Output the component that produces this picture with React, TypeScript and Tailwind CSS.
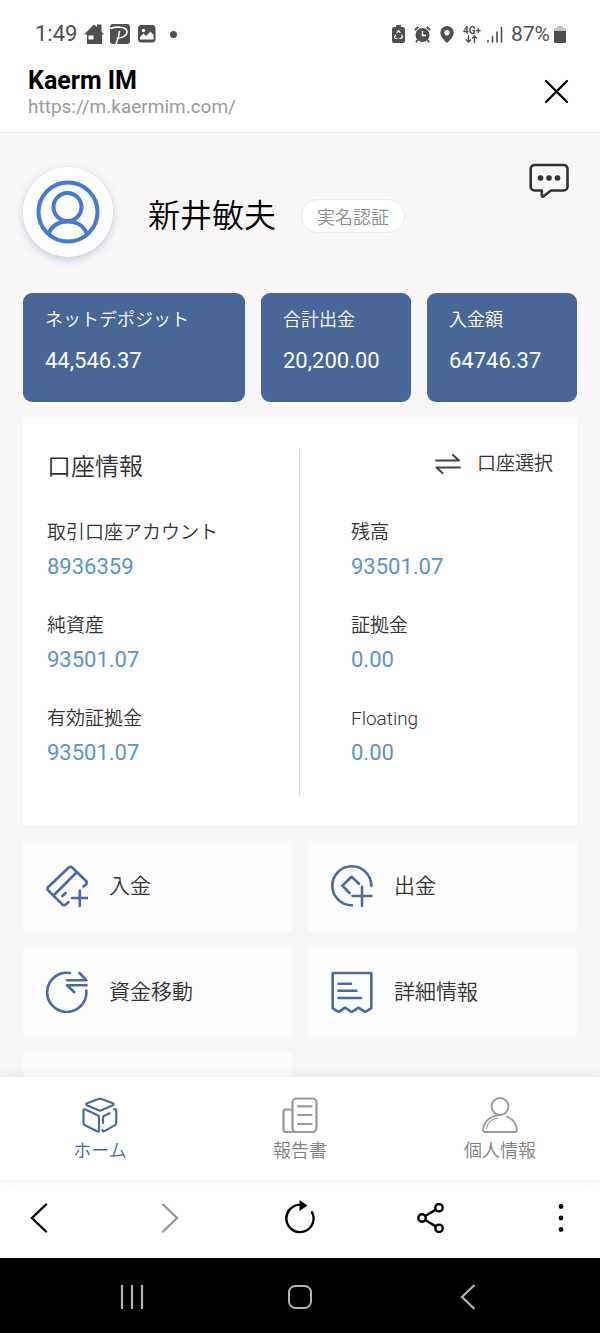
import type { ReactNode } from 'react'

interface Stat {
  label: string
  value: string
}

const totals: Stat[] = [
  { label: 'ネットデポジット', value: '44,546.37' },
  { label: '合計出金', value: '20,200.00' },
  { label: '入金額', value: '64746.37' },
]

const accountLeft: Stat[] = [
  { label: '取引口座アカウント', value: '8936359' },
  { label: '純資産', value: '93501.07' },
  { label: '有効証拠金', value: '93501.07' },
]

const accountRight: Stat[] = [
  { label: '残高', value: '93501.07' },
  { label: '証拠金', value: '0.00' },
  { label: 'Floating', value: '0.00' },
]

function StatusBar() {
  return (
    <div className="flex h-[66px] shrink-0 items-center justify-between pt-0.5 pr-[34px] pl-[35px] text-[#4f4f4f]">
      <div className="flex items-center">
        <span className="text-[22px] leading-7">1:49</span>
        <svg className="ml-[7px] size-5" viewBox="0 0 20 20" fill="currentColor">
          <path fillRule="evenodd" d="M0 10.500 10 .5l3 2.500V.5h4.500v7l2.500 3h-2V20H3v-9.500zM4.500 11.500v4h5v-4z" />
        </svg>
        <svg className="ml-1.5 size-5" viewBox="0 0 20 20" fill="none" stroke="#fff">
          <rect width="20" height="20" rx="3" fill="currentColor" stroke="none" />
          <path d="M0 4.500C6 2.500 16.500 2 17 7.500 17.300 11.500 12 14.500 6.500 14" strokeWidth="1.600" />
          <path d="M9.500 7C9 12 8 16 6 20" strokeWidth="1.600" />
        </svg>
        <svg className="ml-2 size-[18px]" viewBox="0 0 18 18">
          <rect width="17.500" height="17.500" rx="3.500" fill="currentColor" />
          <circle cx="5.500" cy="5.500" r="1.700" fill="#fff" />
          <path d="M2 14.500V12l3.500-3.500L8 11l4.500-4.500 3 3.500v4.500z" fill="#fff" />
        </svg>
        <span className="ml-3.5 size-[7px] rounded-full bg-[#4f4f4f]" />
      </div>

      <div className="flex items-center">
        <svg className="h-[18px] w-[13px]" viewBox="0 0 13 18">
          <path d="M4 0h5v2h2a2 2 0 0 1 2 2v12a2 2 0 0 1-2 2H2a2 2 0 0 1-2-2V4a2 2 0 0 1 2-2h2z" fill="currentColor" />
          <path d="m4.700 8 1.800-2.500L8.300 8M9.500 9.800l1 2.200-1.500 1.500H7.300M5.500 13.500H3.200L2.500 12l1.200-2.300" fill="none" stroke="#fff" strokeWidth="1.200" />
        </svg>
        <svg className="ml-[9px] size-[17px]" viewBox="0 0 17 17">
          <circle cx="8.500" cy="9" r="7" fill="currentColor" />
          <path d="M.8 4 4.300 1M16.200 4l-3.500-3M3.500 14l-1.500 2.300M13.500 14l1.500 2.300" stroke="currentColor" strokeWidth="1.800" />
          <path d="M8.500 5v4.500h3.500" fill="none" stroke="#fff" strokeWidth="1.500" />
        </svg>
        <svg className="ml-[9px] h-[17px] w-[14px]" viewBox="0 0 14 17">
          <path fillRule="evenodd" d="M7 0a6.700 6.700 0 0 1 6.700 6.700C13.700 11 7 17 7 17S.3 11 .3 6.700A6.700 6.700 0 0 1 7 0zm0 4a2.700 2.700 0 1 0 0 5.400A2.700 2.700 0 0 0 7 4z" fill="currentColor" />
        </svg>
        <div className="ml-[9px] flex flex-col items-center">
          <span className="text-[10px] leading-[9px] font-bold">4G+</span>
          <svg className="h-2 w-[13px]" viewBox="0 0 13 8" fill="none" stroke="currentColor" strokeWidth="1.400">
            <path d="M3.500 0v7M1 4.500 3.500 7 6 4.500M9.500 8V1M7 3.500 9.500 1 12 3.500" />
          </svg>
        </div>
        <svg className="ml-1.5 h-[17px] w-4" viewBox="0 0 16 17" stroke="currentColor" strokeWidth="1.600" strokeLinecap="round">
          <path d="M1 14.500V16M5.500 10.500V16M10 6v10M14.500 1.500V16" />
        </svg>
        <span className="ml-2 text-[21px] leading-7">87%</span>
        <svg className="ml-1 h-[17px] w-3" viewBox="0 0 12 17">
          <path d="M3 0h6v2h1.500A1.500 1.500 0 0 1 12 3.500V6H0V3.500A1.500 1.500 0 0 1 1.500 2H3z" fill="#c4c4c4" />
          <path d="M0 5h12v10.500a1.500 1.500 0 0 1-1.500 1.500h-9A1.500 1.500 0 0 1 0 15.500z" fill="currentColor" />
        </svg>
      </div>
    </div>
  )
}

function SiteHeader() {
  return (
    <header className="flex shrink-0 items-start justify-between border-b border-[#ececec] pr-[31px] pb-[13px] pl-7">
      <div className="pt-px">
        <h1 className="text-[25px] leading-7 font-bold text-black">Kaerm IM</h1>
        <p className="text-[19px] leading-6 text-[#9b9b9b]">https://m.kaermim.com/</p>
      </div>
      <button type="button" aria-label="閉じる" className="flex h-[50px] items-center">
        <svg className="size-[25px]" viewBox="0 0 25 25" stroke="#000" strokeWidth="2.300" strokeLinecap="round">
          <path d="m2 2 21 21M23 2 2 23" />
        </svg>
      </button>
    </header>
  )
}

function Profile() {
  return (
    <section className="flex h-[98px] items-center">
      <div className="flex size-[90px] shrink-0 items-center justify-center rounded-full bg-white shadow-[0_3px_8px_rgba(71,103,153,0.3)]">
        <svg className="size-16" viewBox="0 0 64 64" fill="none" stroke="#4179dc" strokeWidth="4">
          <circle cx="32" cy="32" r="29.500" />
          <circle cx="31.500" cy="27" r="14" />
          <path d="M12.500 54C15.500 46 22.500 41.500 31.500 41.500S48 46 51 54" />
        </svg>
      </div>
      <h2 className="ml-[35px] pt-2 text-[32px] leading-10 font-[350] text-black">新井敏夫</h2>
      <span className="mt-2 ml-[25px] rounded-full border border-[#ebebeb] bg-white px-[15px] pt-1.5 pb-0.5 text-[18px] leading-6 font-[350] text-[#8f8f8f]">
        実名認証
      </span>
      <button type="button" aria-label="メッセージ" className="mr-2 ml-auto self-start">
        <svg className="h-9 w-10" viewBox="0 0 40 36" fill="none" stroke="#333" strokeWidth="2.600" strokeLinejoin="round">
          <path d="M5.500 2h29A3.800 3.800 0 0 1 38.500 5.800v17.900a3.800 3.800 0 0 1-3.800 3.800H22L14.500 33.300c-1 .7-1.700.3-1.700-.8v-5H5.500a3.800 3.800 0 0 1-3.800-3.800V5.800A3.800 3.800 0 0 1 5.500 2z" />
          <g fill="#333" stroke="none">
            <circle cx="11.500" cy="15" r="2.800" />
            <circle cx="20" cy="15" r="2.800" />
            <circle cx="28.500" cy="15" r="2.800" />
          </g>
        </svg>
      </button>
    </section>
  )
}

function StatList({ items }: { items: Stat[] }) {
  return (
    <dl className="mt-[35px] flex flex-col gap-[31px]">
      {items.map((item) => (
        <div key={item.label} className="flex flex-col gap-1.5">
          <dt className="text-[19px] leading-7 font-[350] text-[#333]">{item.label}</dt>
          <dd className="text-[22px] leading-7 text-[#5b95c8]">{item.value}</dd>
        </div>
      ))}
    </dl>
  )
}

function AccountPanel() {
  return (
    <section className="mt-4 grid grid-cols-2 bg-white pt-[31px] pb-[30px]">
      <div className="border-r border-[#dcdcdc] pt-px pb-7 pl-6">
        <h3 className="text-[24px] leading-[34px] font-[350] text-[#333]">口座情報</h3>
        <StatList items={accountLeft} />
      </div>
      <div className="pt-px pb-7 pl-[51px]">
        <div className="flex h-[34px] items-start justify-end pr-6">
          <button type="button" className="flex items-center gap-4 text-[19px] leading-7 font-[350] text-[#333]">
            <svg className="h-5 w-[26px]" viewBox="0 0 26 20" fill="none" stroke="#444" strokeWidth="2" strokeLinecap="round" strokeLinejoin="round">
              <path d="M1 6.500h23L18 1M25 13.500H1.500l6 5.500" />
            </svg>
            口座選択
          </button>
        </div>
        <StatList items={accountRight} />
      </div>
    </section>
  )
}

function Tile({ label, children }: { label: string; children: ReactNode }) {
  return (
    <a href="#" className="flex h-[90px] items-center gap-[21px] bg-[#fdfdfd] pl-[23px] text-[21px] leading-8 font-[350] text-[#333]">
      <svg className="size-[42px]" viewBox="0 0 42 42" fill="none" stroke="#4a6aa2" strokeWidth="2.600" strokeLinecap="round" strokeLinejoin="round">
        {children}
      </svg>
      {label}
    </a>
  )
}

function Actions() {
  return (
    <nav className="mt-4 grid grid-cols-2 gap-4">
      <Tile label="入金">
        <path d="M37.500 21.500l2.700-2.300q1.300-1.700-.2-3.200L26.500 2.700q-2-1.800-4 0L2.300 22q-1.700 1.700 0 3.500L16 39.200q2 1.800 4 .2l2.300-2.200" />
        <path d="M30 8 8.500 29.500M16.500 31l3-3M26 33h15.500M33.800 25.500v15.500" />
      </Tile>
      <Tile label="出金">
        <path d="M40.300 21A19.500 19.500 0 1 0 21 40.300" />
        <path d="M28 18.800 20.500 11.800 11.300 20.700 18.500 28M21.500 31h19M31 21.800v19" />
      </Tile>
      <Tile label="資金移動">
        <path d="M24 2A19.600 19.600 0 1 0 40.300 19.500" />
        <path d="M21 9.300h19.500L33.500 2M40.500 14.200H21l7.300 7" />
      </Tile>
      <Tile label="詳細情報">
        <path d="M1.700 2h38.600v35.200L34.200 41l-6.700-4.300L20.700 41l-6.700-4.300L7.500 41l-5.800-3.800z" />
        <path d="M7.500 12.800h12.500M7.500 19.800h18M7.500 27h22.500" />
      </Tile>
      <div className="h-[90px] bg-[#fdfdfd]" />
    </nav>
  )
}

function TabBar() {
  return (
    <nav className="relative grid shrink-0 grid-cols-3 border-b border-[#f4f4f4] bg-white pt-5 pb-[15px] text-[18px] leading-7 font-[350] text-[#808080] shadow-[0_-3px_14px_rgba(0,0,0,0.06)]">
      <a href="#" aria-current="page" className="flex flex-col items-center gap-1 text-[#4a6aa2]">
        <svg className="size-9" viewBox="0 0 36 36" fill="none" stroke="currentColor" strokeWidth="2.200" strokeLinecap="round" strokeLinejoin="round">
          <path d="M16.500 2q1.500-.8 3 0l11.300 4.300q1.700.9 0 1.900L19.500 13.300q-1.500.7-3 0L5 8.200q-1.600-1 0-1.900z" />
          <path d="M3.500 12.500 16 18.500q1 .6 1 1.700v13.300q0 1.600-1.500 1L3 28.200q-1.500-.8-1.500-2.200V13.800q0-1.900 2-1.300z" />
          <path d="M32 12.300q2.300-.8 2.300 1.300v12.200q0 1.500-1.300 2.300l-10.500 6q-2 .9-2-1M21 26v-5.500q0-1 1-1.600l5.500-2.700" />
        </svg>
        ホーム
      </a>
      <a href="#" className="flex flex-col items-center gap-1">
        <svg className="size-9" viewBox="0 0 36 36" fill="none" stroke="#999" strokeWidth="2.200" strokeLinecap="round" strokeLinejoin="round">
          <rect x="10.500" y="1.500" width="24" height="33.500" rx="4" />
          <path d="M10.500 12.500H4q-2.500 0-2.500 2.500v17.500Q1.500 35 4 35h10M16 9.300h13.500M16 18h13.500M16 27h13.500" />
        </svg>
        報告書
      </a>
      <a href="#" className="flex flex-col items-center gap-1">
        <svg className="size-9" viewBox="0 0 36 36" fill="none" stroke="#999" strokeWidth="1.800" strokeLinecap="round" strokeLinejoin="round">
          <circle cx="18" cy="9.500" r="8.500" />
          <path d="M16 18.300C7 19.500 1.300 25.500 1 33.500q0 1.500 1.500 1.500h31q1.500 0 1.500-1.500c-.5-6-4-11.500-10-13.800" />
          <path d="M4.500 31.500c1-5.500 5-9.500 11-10.500" strokeWidth="1.200" />
        </svg>
        個人情報
      </a>
    </nav>
  )
}

function BrowserBar() {
  const button = 'flex h-9 w-8 items-center justify-center'
  return (
    <div className="flex h-[77px] shrink-0 items-center justify-between bg-white px-[23px] pb-1">
      <button type="button" aria-label="戻る" className={button}>
        <svg className="h-[30px] w-[18px]" viewBox="0 0 18 30" fill="none" stroke="#000" strokeWidth="2.400" strokeLinecap="round">
          <path d="M16 1.500 2 15l14 13.500" />
        </svg>
      </button>
      <button type="button" aria-label="進む" className={button}>
        <svg className="h-[30px] w-[18px]" viewBox="0 0 18 30" fill="none" stroke="#999" strokeWidth="2.400" strokeLinecap="round">
          <path d="M2 1.500 16 15 2 28.500" />
        </svg>
      </button>
      <button type="button" aria-label="再読み込み" className={button}>
        <svg className="h-9 w-8" viewBox="0 0 32 36">
          <path d="M28 12.200A13.600 13.600 0 1 1 16 4.900" fill="none" stroke="#000" strokeWidth="2.400" strokeLinecap="round" />
          <path d="M15.500 0 23.500 5.500 15.500 11z" />
        </svg>
      </button>
      <button type="button" aria-label="共有" className={button}>
        <svg className="h-[30px] w-[27px]" viewBox="0 0 27 30" fill="none" stroke="#000" strokeWidth="2.400">
          <circle cx="22" cy="4.700" r="3.700" />
          <circle cx="5" cy="15" r="3.700" />
          <circle cx="22" cy="25.300" r="3.700" />
          <path d="m8.200 13 10.600-6.400M8.200 17l10.600 6.400" />
        </svg>
      </button>
      <button type="button" aria-label="メニュー" className={button}>
        <svg className="h-[30px] w-1.5" viewBox="0 0 6 30">
          <circle cx="3" cy="3.500" r="2.400" />
          <circle cx="3" cy="15" r="2.400" />
          <circle cx="3" cy="26.500" r="2.400" />
        </svg>
      </button>
    </div>
  )
}

function SystemBar() {
  return (
    <div className="grid h-[75px] shrink-0 grid-cols-3 items-center justify-items-center bg-black px-12 pt-0.5">
      <button type="button" aria-label="履歴">
        <svg className="h-6 w-6" viewBox="0 0 24 24" stroke="#b4b4b4" strokeWidth="2.200">
          <path d="M2 0v24M12 0v24M22 0v24" />
        </svg>
      </button>
      <button type="button" aria-label="ホーム画面">
        <svg className="size-6" viewBox="0 0 24 24" fill="none" stroke="#b4b4b4" strokeWidth="2">
          <rect x="1" y="1" width="22" height="22" rx="6.500" />
        </svg>
      </button>
      <button type="button" aria-label="前の画面">
        <svg className="h-[26px] w-4" viewBox="0 0 16 26" fill="none" stroke="#b4b4b4" strokeWidth="2.200">
          <path d="M14.500 1 2 13l12.500 12" />
        </svg>
      </button>
    </div>
  )
}

export default function App() {
  return (
    <div lang="ja" className="flex h-screen flex-col bg-white font-['Roboto','Noto_Sans_CJK_JP',sans-serif]">
      <StatusBar />
      <SiteHeader />
      <main className="min-h-0 flex-1 overflow-hidden bg-[#f9f7f8] px-[23px] pt-[30px]">
        <Profile />
        <section className="mt-8 grid grid-cols-[222fr_150fr_150fr] gap-4">
          {totals.map((item) => (
            <div key={item.label} className="rounded-[9px] bg-[#476799] pt-[15px] pb-[27px] pl-[22px] text-white">
              <p className="text-[18px] leading-6 font-[350]">{item.label}</p>
              <p className="mt-[15px] text-[22px] leading-7">{item.value}</p>
            </div>
          ))}
        </section>
        <AccountPanel />
        <Actions />
      </main>
      <TabBar />
      <BrowserBar />
      <SystemBar />
    </div>
  )
}
